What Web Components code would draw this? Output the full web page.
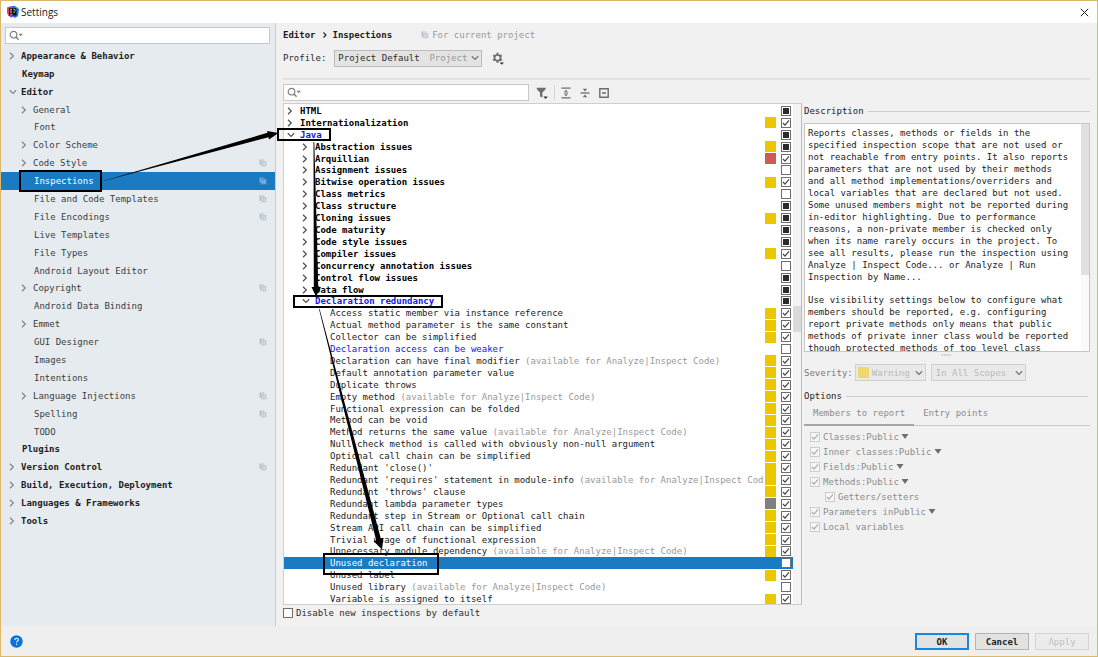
<!DOCTYPE html>
<html lang="en">
<head>
<meta charset="utf-8">
<title>Settings</title>
<style>
  html, body { margin: 0; height: 100%; }
  body { font: 9px/12px "DejaVu Sans Mono", "Liberation Mono", monospace; color: #2b2b2b; overflow: hidden; }
</style>
</head>
<body>
<settings-window></settings-window>
<script>
function define(name, template, connected) {
  customElements.define(name, class extends HTMLElement {
    connectedCallback() {
      if (this.shadowRoot) return;
      const root = this.attachShadow({ mode: 'open' });
      root.innerHTML = typeof template === 'function' ? template(this) : template;
      if (connected) connected(root, this);
    }
  });
}

/* ---------- icons ---------- */
const ICONS = {
  right: [6, 8, '<path d="M1 .8 4.3 4 1 7.2" fill="none" stroke="currentColor" stroke-width="1.3"/>'],
  crumb: [6, 8, '<path d="M1.500 1.500 4 4 1.500 6.500" fill="none" stroke="currentColor" stroke-width="1.1"/>'],
  down: [8, 6, '<path d="M.8 1.2 4 4.4 7.2 1.2" fill="none" stroke="currentColor" stroke-width="1.3"/>'],
  caret: [8, 5, '<path d="M.5 0h7L4 5z" fill="currentColor"/>'],
  search: [15, 11, '<circle cx="4.5" cy="4.7" r="3.3" fill="none" stroke="currentColor" stroke-width="1.2"/><path d="m7 7 2.6 2.8" stroke="currentColor" stroke-width="1.5"/><path d="M9.500 3.800h4.400l-2.200 2.400z" fill="currentColor"/>'],
  copy: [8, 8, '<path d="M.5 5.800V.6h4.800v1H2v4.200z" fill="currentColor"/><path d="M2 2h5.400v5.400H2z" fill="currentColor" opacity=".75"/><path d="M3.600 3.500v2.800M5.600 3.500v2.800" stroke="#fff" stroke-width=".7" opacity=".5"/>'],
  gear: [13, 13, '<circle cx="5.5" cy="5.8" r="3" fill="none" stroke="currentColor" stroke-width="1.7"/><path d="M5.5 .8v1.8M5.5 9v1.8M1.2 3.3l1.5.9M8.3 7.4l1.5.9M1.2 8.3l1.5-.9M8.3 4.2l1.5-.9" stroke="currentColor" stroke-width="2"/><path d="M7.6 10.4h4.4l-2.2 2.4z" fill="#333"/>'],
  filter: [13, 12, '<path d="M.8.8h8.8v1.4L6.4 5.6v5L4 9.4V5.6L.8 2.2z" fill="currentColor"/><path d="M7.4 9.6h4.4l-2.2 2.3z" fill="#333"/>'],
  expand: [10, 12, '<path d="M.5 1.200h9M.5 10.800h9M3 6h4" stroke="currentColor" stroke-width="1.2"/><path d="M5 2.700 6.900 4.800H3.100zM5 9.300 3.100 7.200h3.800z" fill="currentColor"/>'],
  collapse: [10, 12, '<path d="M.5 6h9" stroke="currentColor" stroke-width="1.3"/><path d="M5 4.6 2.8 1.8h4.4zM5 7.4l2.2 2.8H2.8z" fill="currentColor"/>'],
  reset: [10, 10, '<path d="M.8.8h8.4v8.4H.8zM3 5h4" fill="none" stroke="currentColor" stroke-width="1.4"/>'],
  close: [9, 9, '<path d="m.8.8 7.4 7.4M8.2.8.8 8.2" stroke="#222" stroke-width="1"/>'],
  help: [13, 13, '<circle cx="6.5" cy="6.5" r="6.2" fill="#0b74da"/><path d="M4.8 5q.1-1.7 1.8-1.7T8.3 5c0 1.1-1.7 1.2-1.7 2.6M6.6 8.7v1.2" fill="none" stroke="#fff" stroke-width="1.1"/>'],
  grip: [12, 4, '<path d="m1 3 1-2M3.5 3l1-2M6 3l1-2M8.5 3l1-2" stroke="currentColor" stroke-width=".8"/>'],
  logo: [12, 12, '<path d="M0 1.5 4 0l3 2-2 6-3.5 2L0 7z" fill="#f6365f"/><path d="M5 0h3l4 3-1 7-3 2-3-2z" fill="#087cfa"/><path d="m1 9 3 2.8 3-1.8z" fill="#8d3fc8"/><path d="m8 0 3 2.5L9 4z" fill="#24b6f5"/><path d="M2 2h7.5v7.5H2z" fill="#111"/><path d="M3 3.2h2M4 3.2v3M3 6.2h2M6 3.2h2v2.4l-.6.6H6M3 8.3h2.6" fill="none" stroke="#ddd" stroke-width=".7"/>']
};
define('ide-icon', el => {
  const [w, h, body] = ICONS[el.getAttribute('name')];
  return `<style>:host{display:inline-flex;flex:none}svg{display:block}</style>
    <svg width="${w}" height="${h}" viewBox="0 0 ${w} ${h}" aria-hidden="true">${body}</svg>`;
});

/* ---------- shared styles ---------- */
const CHECK = `
  input[type=checkbox]{appearance:none;box-sizing:border-box;flex:none;width:10px;height:10px;margin:0;border:1px solid #6e6e6e;background:#fff center/8px 8px no-repeat}
  input[type=checkbox]:checked{background-image:url("data:image/svg+xml,%3Csvg xmlns='http://www.w3.org/2000/svg' viewBox='0 0 8 8'%3E%3Cpath d='M1 4l2 2.2L7 1.4' fill='none' stroke='%23444' stroke-width='1.2'/%3E%3C/svg%3E")}
  input[type=checkbox]:indeterminate{background-image:linear-gradient(#2b2b2b,#2b2b2b);background-size:6px 6px}
  input[type=checkbox]:disabled{opacity:.4;border-color:#999}
`;
const SELECT = `
  select{appearance:none;box-sizing:border-box;margin:0;font:inherit;color:inherit;opacity:1;border-radius:0;outline:0}
`;

/* ---------- search field ---------- */
define('search-field', el => `
  <style>
    :host{display:flex;box-sizing:border-box;height:17px;align-items:center;background:#fff;border:1px solid #c6c8ca;color:#808080;padding-left:3px}
    input{flex:1;min-width:0;height:13px;border:0;padding:0 2px;background:none;font:inherit;outline:0}
  </style>
  <ide-icon name="search"></ide-icon><input type="text" aria-label="${el.getAttribute('label')}">`);

/* ---------- left navigation ---------- */
define('nav-item', el => `
  <style>
    :host{display:flex;align-items:center;min-height:0;color:#3a3d40;padding:0 8px}
    :host([depth="0"]){font-weight:bold;color:#1c1c1c}
    :host([depth="1"]){padding-left:20px}
    :host([selected]){background:#1a7bc3;color:#fff}
    .twist{width:12px;flex:none;display:flex;color:#888;align-items:center}
    .twist:empty{width:13px}
    .text{flex:1;white-space:nowrap}
    .copy{display:flex;color:#b5c2cc}
    :host([selected]) .copy{color:#75a9d6}
  </style>
  <span class="twist">${el.hasAttribute('icon') ? `<ide-icon name="${el.getAttribute('icon')}"></ide-icon>` : ''}</span>
  <span class="text"><slot></slot></span>
  ${el.hasAttribute('shared') ? '<span class="copy"><ide-icon name="copy"></ide-icon></span>' : ''}`);

/* text, depth, twist, per-project marker */
const NAV = [
  ['Appearance &amp; Behavior', 0, 'right'], ['Keymap', 0], ['Editor', 0, 'down'],
  ['General', 1, 'right'], ['Font', 1], ['Color Scheme', 1, 'right'], ['Code Style', 1, 'right', 1],
  ['Inspections', 1, '', 1], ['File and Code Templates', 1, '', 1], ['File Encodings', 1, '', 1],
  ['Live Templates', 1], ['File Types', 1], ['Android Layout Editor', 1], ['Copyright', 1, 'right', 1],
  ['Android Data Binding', 1], ['Emmet', 1, 'right'], ['GUI Designer', 1, '', 1], ['Images', 1],
  ['Intentions', 1], ['Language Injections', 1, 'right', 1], ['Spelling', 1, '', 1], ['TODO', 1],
  ['Plugins', 0], ['Version Control', 0, 'right', 1], ['Build, Execution, Deployment', 0, 'right'],
  ['Languages &amp; Frameworks', 0, 'right'], ['Tools', 0, 'right']
];
define('settings-nav', `
  <style>
    :host{display:flex;flex-direction:column;box-sizing:border-box;background:#e6ebef;border-right:1px solid #c9cbcd;padding:4px 0 96px}
    search-field{margin:0 5px 3px 4px}
    nav{flex:1;display:grid;grid-auto-rows:minmax(12px,1fr);min-height:0}
  </style>
  <search-field label="Search settings"></search-field>
  <nav aria-label="Settings categories">${NAV.map(([t, d, i, s]) =>
    `<nav-item depth="${d}"${i ? ` icon="${i}"` : ''}${s ? ' shared' : ''}${t === 'Inspections' ? ' selected' : ''}>${t}</nav-item>`).join('')}</nav>`);

/* ---------- inspections tree ---------- */
define('inspection-row', el => {
  const icon = el.getAttribute('icon'), sev = el.getAttribute('severity');
  return `
  <style>${CHECK}
    :host{display:block;min-width:0;min-height:0;color:#222}
    :host([group]){font-weight:bold;color:#000}
    :host([changed]){color:#1414f0}
    :host([selected]){background:#1a7bc3;color:#fff}
    label{display:flex;height:100%;align-items:center;padding:0 2px 0 3px;line-height:12px}
    :host([depth="1"]) label{padding-left:18px}
    :host([depth="2"]) label{padding-left:33px}
    .twist{width:13px;flex:none;display:flex;color:#555}
    .text{flex:1;min-width:0;overflow:hidden;white-space:nowrap;margin-right:2px}
    i{width:11px;height:11px;margin-right:5px;flex:none}
    .warning{background:#ebc700}.error{background:#cf5b56}.weak{background:#808080}
    ::slotted(small){font-size:inherit;color:#999}
  </style>
  <label><span class="twist">${icon ? `<ide-icon name="${icon}"></ide-icon>` : ''}</span>
  <span class="text"><slot></slot></span><i class="${sev}"></i><input type="checkbox"></label>`;
}, (root, el) => {
  const box = root.querySelector('input'), s = el.getAttribute('state');
  box.checked = s === 'on';
  box.indeterminate = s === 'some';
});

const NOTE = '<small> (available for Analyze|Inspect Code)</small>';
/* text, depth, severity, state, flags */
const W = 'warning';
const ROWS = [
  ['HTML', 0, '', 'some'], ['Internationalization', 0, W, 'on'], ['Java', 0, '', 'some', 'changed open'],
  ['Abstraction issues', 1, W, 'some'], ['Arquillian', 1, 'error', 'on'], ['Assignment issues', 1, '', 'off'],
  ['Bitwise operation issues', 1, W, 'on'], ['Class metrics', 1, '', 'off'], ['Class structure', 1, '', 'some'],
  ['Cloning issues', 1, W, 'some'], ['Code maturity', 1, '', 'some'], ['Code style issues', 1, '', 'some'],
  ['Compiler issues', 1, W, 'on'], ['Concurrency annotation issues', 1, '', 'off'],
  ['Control flow issues', 1, '', 'some'], ['Data flow', 1, '', 'some'],
  ['Declaration redundancy', 1, '', 'some', 'changed open'],
  ['Access static member via instance reference', 2, W, 'on'],
  ['Actual method parameter is the same constant', 2, W, 'on'],
  ['Collector can be simplified', 2, W, 'on'],
  ['Declaration access can be weaker', 2, '', 'off', 'changed'],
  ['Declaration can have final modifier' + NOTE, 2, W, 'on'],
  ['Default annotation parameter value', 2, W, 'on'], ['Duplicate throws', 2, W, 'on'],
  ['Empty method' + NOTE, 2, W, 'on'], ['Functional expression can be folded', 2, W, 'on'],
  ['Method can be void', 2, W, 'on'], ['Method returns the same value' + NOTE, 2, W, 'on'],
  ['Null-check method is called with obviously non-null argument', 2, W, 'on'],
  ['Optional call chain can be simplified', 2, W, 'on'], ["Redundant 'close()'", 2, W, 'on'],
  ["Redundant 'requires' statement in module-info" + NOTE, 2, W, 'on'],
  ["Redundant 'throws' clause", 2, W, 'on'], ['Redundant lambda parameter types', 2, 'weak', 'on'],
  ['Redundant step in Stream or Optional call chain', 2, W, 'on'],
  ['Stream API call chain can be simplified', 2, W, 'on'],
  ['Trivial usage of functional expression', 2, W, 'on'],
  ['Unnecessary module dependency' + NOTE, 2, W, 'on'],
  ['Unused declaration', 2, '', 'off', 'selected'], ['Unused label', 2, W, 'on'],
  ['Unused library' + NOTE, 2, '', 'off'], ['Variable is assigned to itself', 2, W, 'on']
];
define('inspection-tree', `
  <style>
    :host{display:flex;min-height:0;overflow:hidden;background:#fff;border:1px solid #cfcfcf;border-right-color:#bdbdbd}
    .rows{flex:1;min-width:0;display:grid;grid-template-columns:minmax(0,1fr);grid-auto-rows:minmax(0,1fr);margin:1px 0 -1px}
    .bar{width:8px;background:#f3f3f3;display:grid;grid-template-rows:202fr 26fr 273fr}
    .bar span{grid-row:2;background:#dadada}
  </style>
  <div class="rows">${ROWS.map(([t, d, sev, st, f = '']) =>
    `<inspection-row depth="${d}" severity="${sev}" state="${st}" ${f} ${d < 2 ? `group icon="${f.includes('open') ? 'down' : 'right'}"` : ''}>${t}</inspection-row>`).join('')}</div>
  <div class="bar"><span></span></div>`);

define('inspection-list', `
  <style>${CHECK}
    :host{display:flex;flex-direction:column;min-height:0;min-width:0}
    .tools{display:flex;align-items:center;height:17px;margin-bottom:2px;color:#6e6e6e}
    search-field{width:246px;margin-right:7px}
    button{border:0;background:none;padding:0;margin:0;color:inherit;display:flex;align-items:center}
    .tools button + button{margin-left:9px}
    hr{width:1px;height:15px;border:0;margin:0 6px 0 5px;background:#d4d4d4}
    inspection-tree{flex:1}
    label{display:flex;align-items:center;gap:3px;height:15px}
  </style>
  <div class="tools">
    <search-field label="Search inspections"></search-field>
    <button aria-label="Filter"><ide-icon name="filter"></ide-icon></button><hr>
    <button aria-label="Expand all"><ide-icon name="expand"></ide-icon></button>
    <button aria-label="Collapse all"><ide-icon name="collapse"></ide-icon></button>
    <button aria-label="Reset to empty"><ide-icon name="reset"></ide-icon></button>
  </div>
  <inspection-tree></inspection-tree>
  <label><input type="checkbox">Disable new inspections by default</label>`);

/* ---------- right column ---------- */
define('titled-rule', `
  <style>:host{display:flex;align-items:center;gap:4px;height:12px;color:#222}
  :host::after{content:"";flex:1;height:1px;background:#cfcfcf}</style><slot></slot>`);

define('description-pane', `
  <style>
    :host{display:flex;height:227px;border:1px solid #c6c6c6;background:#fff;overflow:hidden;color:#222}
    .text{flex:1;padding:3px 0 0 3px}
    ::slotted(p){margin:0 0 11px;max-width:calc(48ch + 2px)}
    .bar{width:8px;background:#fafafa}
    .bar span{display:block;height:151px;background:#e0e0e0}
  </style>
  <div class="text"><slot></slot></div><div class="bar"><span></span></div>`);

define('visibility-option', el => {
  const vis = el.hasAttribute('visibility');
  return `
  <style>${CHECK}${SELECT}
    :host{display:flex;align-items:center;height:15px;color:#8c8c8c;padding-left:6px}
    :host([nested]){padding-left:21px}
    label{display:flex;align-items:center;gap:3px;white-space:nowrap}
    .pick{display:grid;align-items:center}
    .pick>*{grid-area:1/1}
    select{border:0;background:none;padding:0 10px 0 0;height:12px}
    ide-icon{justify-self:end;pointer-events:none;color:#6e6e6e}
  </style>
  <label><input type="checkbox" checked disabled><slot></slot></label>
  ${vis ? `<span class="pick"><select disabled aria-label="${el.textContent} visibility"><option>Public</option></select><ide-icon name="caret"></ide-icon></span>` : ''}`;
});

define('inspection-details', `
  <style>${SELECT}
    :host{display:flex;flex-direction:column;padding:22px 0 0 2px;min-width:0}
    description-pane{margin-top:6px}
    .grip{display:flex;justify-content:center;height:6px;align-items:center;color:#aaa;margin-bottom:6px}
    .severity{display:flex;align-items:center;color:#777;height:17px}
    .combo{display:grid;align-items:center;color:#bbb}
    .combo>*{grid-area:1/1}
    .combo select{height:17px;border:1px solid #d0d0d0;background:#e9e9e9;padding:0 18px 0 4px}
    .combo ide-icon{justify-self:end;margin-right:3px;color:#777;pointer-events:none}
    .warn{width:71px;margin:0 5px 0 2px}
    .warn select{padding:0 12px 0 16px}
    .warn i{width:11px;height:11px;margin-left:3px;background:#ecd96f;pointer-events:none}
    .scope{width:91px}
    .opt{margin:9px 2px 2px 0}
    .tabs{display:flex;border-bottom:1px solid #cacaca;height:21px;margin-bottom:3px}
    .tabs button{box-sizing:border-box;height:22px;border:0;border-bottom:2px solid transparent;background:none;font:inherit;color:#8c8c8c;padding:0 9px 2px}
    .tabs [aria-selected=true]{border-color:#a6a6a6}
  </style>
  <titled-rule>Description</titled-rule>
  <description-pane>
    <p>Reports classes, methods or fields in the specified inspection scope that are not used or not reachable from entry points. It also reports parameters that are not used by their methods and all method implementations/overriders and local variables that are declared but not used. Some unused members might not be reported during in-editor highlighting. Due to performance reasons, a non-private member is checked only when its name rarely occurs in the project. To see all results, please run the inspection using Analyze | Inspect Code... or Analyze | Run Inspection by Name...</p>
    <p>Use visibility settings below to configure what members should be reported, e.g. configuring report private methods only means that public methods of private inner class would be reported though protected methods of top level class</p>
  </description-pane>
  <div class="grip"><ide-icon name="grip"></ide-icon></div>
  <div class="severity">
    <label for="sev">Severity:</label>
    <span class="combo warn"><select id="sev" disabled><option>Warning</option></select><i></i><ide-icon name="down"></ide-icon></span>
    <span class="combo scope"><select disabled aria-label="Scope"><option>In All Scopes</option></select><ide-icon name="down"></ide-icon></span>
  </div>
  <titled-rule class="opt">Options</titled-rule>
  <div class="tabs" role="tablist">
    <button role="tab" aria-selected="true">Members to report</button>
    <button role="tab" aria-selected="false">Entry points</button>
  </div>
  <visibility-option visibility>Classes:</visibility-option>
  <visibility-option visibility>Inner classes:</visibility-option>
  <visibility-option visibility>Fields:</visibility-option>
  <visibility-option visibility>Methods:</visibility-option>
  <visibility-option nested>Getters/setters</visibility-option>
  <visibility-option visibility>Parameters in</visibility-option>
  <visibility-option>Local variables</visibility-option>`);

/* ---------- inspections page ---------- */
define('inspections-page', `
  <style>${SELECT}
    :host{display:flex;flex-direction:column;box-sizing:border-box;min-width:0;min-height:0;background:#f1f1f1;padding:6px 7px 6px 7px}
    .crumbs{display:flex;align-items:center;height:12px;font-weight:bold;color:#1c1c1c;white-space:pre}
    .crumbs ide-icon{margin:0 5px 0 6px;color:#222}
    .project{display:flex;align-items:center;font-weight:normal;color:#999;margin-left:29px}
    .project ide-icon{color:#b5c2cc;margin:0 3px 0 0}
    .profile{display:flex;align-items:center;height:18px;margin:8px 0 11px}
    .combo{display:grid;grid-template-columns:1fr auto auto;align-items:center;width:148px;margin:0 10px 0 8px}
    .combo select{grid-area:1/1/2/4;height:17px;border:1px solid #bcbcbc;background:#e3e3e3;padding:0 3px}
    .combo span{grid-area:1/2;color:#999;pointer-events:none}
    .combo ide-icon{grid-area:1/3;color:#777;margin:0 3px 0 4px;pointer-events:none}
    button{border:0;background:none;padding:0;color:#6e6e6e;display:flex}
    hr{height:2px;border:0;margin:0 0 4px;background:#e2e2e2}
    .split{flex:1;min-height:0;display:grid;grid-template-columns:minmax(0,1fr) 288px;grid-template-rows:minmax(0,1fr)}
    inspection-details{margin-top:-1px}
  </style>
  <div class="crumbs">Editor<ide-icon name="crumb"></ide-icon>Inspections<span class="project"><ide-icon name="copy"></ide-icon>For current project</span></div>
  <div class="profile"><label for="profile">Profile:</label>
    <div class="combo"><select id="profile"><option>Project Default</option></select><span>Project</span><ide-icon name="down"></ide-icon></div>
    <button aria-label="Profile actions"><ide-icon name="gear"></ide-icon></button></div>
  <hr>
  <div class="split"><inspection-list></inspection-list><inspection-details></inspection-details></div>`);

/* ---------- title bar and footer ---------- */
define('title-bar', `
  <style>
    :host{display:flex;align-items:center;height:22px;background:#fff;padding:0 8px 0 6px;font:10px/14px "Open Sans","Noto Sans",sans-serif;color:#222}
    span{flex:1;margin-left:2px}
    button{border:0;background:none;padding:0;display:flex}
  </style>
  <ide-icon name="logo"></ide-icon><span><slot></slot></span>
  <button aria-label="Close"><ide-icon name="close"></ide-icon></button>`);

define('dialog-footer', `
  <style>
    :host{display:flex;align-items:center;gap:6px;box-sizing:border-box;height:30px;background:#efefef;padding:1px 8px 0 9px}
    button{box-sizing:border-box;width:54px;height:17px;border:1px solid #b5b5b5;background:#e2e2e2;font:inherit;font-weight:bold;color:#222;padding:0}
    .help{border:0;background:none;width:13px;display:flex;align-items:center;margin-right:auto}
    .primary{border:2px solid #1a86dc}
    button:disabled{font-weight:normal;color:#c0c0c0;border-color:#d4d4d4;background:#ececec}
  </style>
  <button class="help" aria-label="Help"><ide-icon name="help"></ide-icon></button>
  <button class="primary">OK</button><button>Cancel</button><button disabled>Apply</button>`);

/* ---------- hand-drawn callouts over the dialog ---------- */
define('callout-layer', `
  <style>:host{position:absolute;left:0;top:0;pointer-events:none}svg{display:block}</style>
  <svg width="460" height="600" viewBox="0 0 460 600" aria-hidden="true">
    <g fill="none" stroke="#000" stroke-width="2">
      <path d="M20 171h81v20H20zM278 129h52v11h-52zM294 296h148v11H294zM324 554h114v20H324z"/>
    </g>
    <path d="M97 182.700 267.500 132.800 267 131 278.500 133 269 139.500l-.5-2.300z"/>
    <path d="M313.500 142h.8L318.300 287h2.700L316 296.500l-4.500-9.500h2.300z"/>
    <path d="M319 309h.6L380.800 538.500l2.700-.7L382 549.500l-8.500-8.500 2.600-.8z"/>
  </svg>`);

define('settings-window', `
  <style>
    :host{position:relative;display:flex;flex-direction:column;box-sizing:border-box;height:100vh;border:1px solid #dcb86a;background:#f0f0f0}
    main{flex:1;min-height:0;display:grid;grid-template-columns:275px minmax(0,1fr);grid-template-rows:minmax(0,1fr)}
    callout-layer{margin:-1px}
  </style>
  <title-bar>Settings</title-bar>
  <main><settings-nav></settings-nav><inspections-page></inspections-page></main>
  <dialog-footer></dialog-footer>
  <callout-layer></callout-layer>`);
</script>
</body>
</html>
